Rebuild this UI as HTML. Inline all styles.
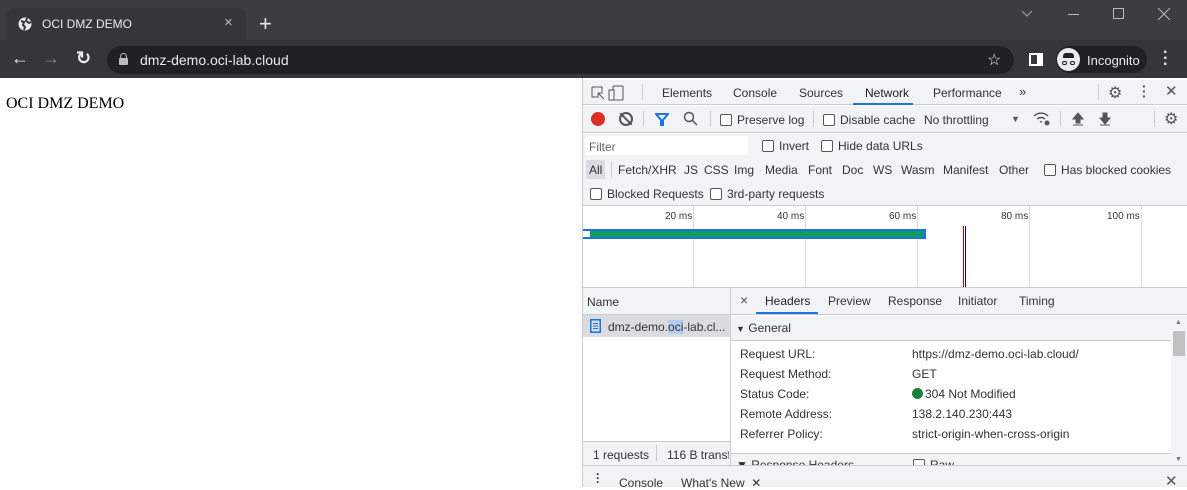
<!DOCTYPE html><html><head><style>
*{box-sizing:border-box;margin:0;padding:0}
body{width:1187px;height:487px;overflow:hidden;position:relative;background:#fff;font-family:"Liberation Sans",sans-serif}
.a{position:absolute}
.dt{font-size:12px;color:#333;white-space:nowrap}
.cb{display:inline-block;width:12px;height:12px;border:1px solid #555;border-radius:2px;vertical-align:-2px;margin-right:5px;background:#fff}
.vs{position:absolute;width:1px;background:#ccc}
</style></head><body>
<!-- tab strip -->
<div class="a" style="left:0;top:0;width:1187px;height:40px;background:#3c3d41"></div>
<div class="a" style="left:6px;top:8px;width:240px;height:34px;background:#35363a;border-radius:8px 8px 0 0"></div>
<svg class="a" style="left:18px;top:17px" width="14" height="14"><circle cx="7" cy="7" r="6.5" fill="#e8eaed"/><path d="M3 4 L6 5 L5 8 L7 10 L6 13 M9 1 L8 4 L11 6 L13 5" stroke="#35363a" stroke-width="2" fill="none"/></svg>
<div class="a" style="left:42px;top:17px;font-size:12px;color:#e8eaed">OCI DMZ DEMO</div>
<div class="a" style="left:224px;top:14px;font-size:15px;color:#bbb">×</div>
<div class="a" style="left:259px;top:11px;font-size:22px;color:#e8eaed;font-weight:300">+</div>
<svg class="a" style="left:1021px;top:10px" width="12" height="8"><path d="M1 1l5 5 5-5" stroke="#9aa0a6" fill="none"/></svg>
<div class="a" style="left:1068px;top:14px;width:11px;height:1px;background:#bbb"></div>
<div class="a" style="left:1113px;top:8px;width:11px;height:11px;border:1px solid #bbb"></div>
<svg class="a" style="left:1158px;top:8px" width="12" height="12"><path d="M0 0l12 12M12 0L0 12" stroke="#bbb"/></svg>
<!-- toolbar -->
<div class="a" style="left:0;top:40px;width:1187px;height:38px;background:#35363a"></div>
<div class="a" style="left:11px;top:48px;font-size:18px;color:#e8eaed">←</div>
<div class="a" style="left:42px;top:48px;font-size:18px;color:#80868b">→</div>
<div class="a" style="left:76px;top:48px;font-size:18px;color:#e8eaed;font-weight:bold">↻</div>
<div class="a" style="left:107px;top:46px;width:907px;height:28px;background:#202124;border-radius:14px"></div>
<div class="a" style="left:119px;top:58px;width:9px;height:7px;background:#bbb;border-radius:1px"></div>
<div class="a" style="left:120px;top:53px;width:7px;height:7px;border:1.5px solid #bbb;border-radius:4px 4px 0 0;border-bottom:none"></div>
<div class="a" style="left:140px;top:52px;font-size:14px;color:#e8eaed">dmz-demo.oci-lab.cloud</div>
<div class="a" style="left:987px;top:50px;font-size:16px;color:#e8eaed">☆</div>
<div class="a" style="left:1029px;top:53px;width:14px;height:13px;border:2px solid #fff;border-right:6px solid #fff"></div>
<div class="a" style="left:1056px;top:46px;width:91px;height:27px;background:#202124;border-radius:14px"></div>
<div class="a" style="left:1057px;top:48px;width:23px;height:23px;background:#e8eaed;border-radius:50%"></div>
<div class="a" style="left:1063px;top:53px;width:11px;height:5px;background:#202124;border-radius:3px 3px 0 0"></div>
<div class="a" style="left:1062px;top:61px;width:5px;height:4px;border:1px solid #202124;border-radius:2px"></div><div class="a" style="left:1070px;top:61px;width:5px;height:4px;border:1px solid #202124;border-radius:2px"></div>
<div class="a" style="left:1087px;top:53px;font-size:13px;color:#e8eaed">Incognito</div>
<div class="a" style="left:1163px;top:50px;font-size:16px;color:#e8eaed;font-weight:bold;line-height:6px">·<br>·<br>·</div>
<!-- page -->
<div class="a" style="left:6px;top:95px;font-family:'Liberation Serif',serif;font-size:16px;color:#000">OCI DMZ DEMO</div>
<!-- devtools -->
<div class="a" style="left:582px;top:78px;width:605px;height:409px;background:#fff;border-left:1px solid #ccc"></div>
<div class="a" style="left:583px;top:80px;width:604px;height:25px;background:#f1f3f4;border-bottom:1px solid #ccc"></div>
<svg class="a" style="left:590px;top:85px" width="40" height="16"><path d="M2 2h10v5M2 2v10h5M8 8l6 6M8 8v5M8 8h5" stroke="#555" fill="none"/><rect x="23" y="1" width="10" height="14" rx="1" stroke="#555" fill="none"/><rect x="19" y="5" width="5" height="10" stroke="#555" fill="#f1f3f4"/></svg>
<div class="vs" style="left:642px;top:84px;height:16px"></div>
<div class="a dt" style="left:662px;top:86px">Elements</div>
<div class="a dt" style="left:733px;top:86px">Console</div>
<div class="a dt" style="left:799px;top:86px">Sources</div>
<div class="a dt" style="left:865px;top:86px;color:#202124">Network</div>
<div class="a" style="left:853px;top:103px;width:60px;height:2px;background:#1a73e8"></div>
<div class="a dt" style="left:933px;top:86px">Performance</div>
<div class="a dt" style="left:1019px;top:84px;font-size:13px">»</div>
<div class="vs" style="left:1098px;top:84px;height:16px"></div>
<div class="a" style="left:1108px;top:83px;font-size:16px;color:#555">⚙</div>
<div class="a" style="left:1142px;top:84px;font-size:14px;color:#555;line-height:5px;font-weight:bold">·<br>·<br>·</div>
<div class="a" style="left:1165px;top:82px;font-size:15px;color:#555">✕</div>
<!-- row2 -->
<div class="a" style="left:583px;top:106px;width:604px;height:27px;background:#f1f3f4;border-bottom:1px solid #ccc"></div>
<div class="a" style="left:591px;top:112px;width:14px;height:14px;border-radius:50%;background:#d93025"></div>
<div class="a" style="left:619px;top:112px;width:14px;height:14px;border-radius:50%;border:2px solid #555"></div>
<div class="a" style="left:625px;top:111px;width:2px;height:16px;background:#555;transform:rotate(-45deg)"></div>
<div class="vs" style="left:643px;top:111px;height:16px"></div>
<svg class="a" style="left:655px;top:112px" width="14" height="14"><path d="M1 2h12L8 8v5H6V8z" fill="none" stroke="#1a73e8" stroke-width="2"/></svg>
<svg class="a" style="left:683px;top:111px" width="15" height="15"><circle cx="6" cy="6" r="4.5" stroke="#555" stroke-width="1.5" fill="none"/><path d="M9 9l5 5" stroke="#555" stroke-width="1.5"/></svg>
<div class="vs" style="left:710px;top:111px;height:16px"></div>
<div class="a dt" style="left:720px;top:113px"><span class="cb"></span>Preserve log</div>
<div class="vs" style="left:813px;top:111px;height:16px"></div>
<div class="a dt" style="left:823px;top:113px"><span class="cb"></span>Disable cache</div>
<div class="a dt" style="left:924px;top:113px">No throttling</div>
<div class="a dt" style="left:1011px;top:114px;font-size:9px;color:#555">▼</div>
<svg class="a" style="left:1033px;top:112px" width="18" height="14"><path d="M1 4a10 10 0 0 1 14 0M4 7a6 6 0 0 1 8 0M7 10a2 2 0 0 1 2 0" stroke="#555" stroke-width="1.5" fill="none"/><circle cx="14" cy="11" r="2.5" fill="#555"/></svg>
<div class="vs" style="left:1060px;top:111px;height:16px"></div>
<svg class="a" style="left:1072px;top:112px" width="12" height="14"><path d="M6 1l5 6H8v4H4V7H1z M1 13h10" fill="#555" stroke="#555"/></svg>
<svg class="a" style="left:1099px;top:112px" width="12" height="14"><path d="M4 1h4v5h3l-5 6-5-6h3z M1 13h10" fill="#555" stroke="#555"/></svg>
<div class="vs" style="left:1154px;top:111px;height:16px"></div>
<div class="a" style="left:1164px;top:109px;font-size:16px;color:#555">⚙</div>
<!-- filter rows -->
<div class="a" style="left:583px;top:134px;width:604px;height:72px;background:#f1f3f4;border-bottom:1px solid #ccc"></div>
<div class="a" style="left:585px;top:136px;width:163px;height:19px;background:#fff"></div>
<div class="a dt" style="left:589px;top:140px;color:#666">Filter</div>
<div class="a dt" style="left:762px;top:139px"><span class="cb"></span>Invert</div>
<div class="a dt" style="left:821px;top:139px"><span class="cb"></span>Hide data URLs</div>
<div class="a" style="left:586px;top:160px;width:19px;height:19px;background:#dadce0;border-radius:2px"></div>
<div class="a dt" style="left:589px;top:163px">All</div>
<div class="vs" style="left:611px;top:162px;height:15px"></div>
<div class="a dt" style="left:618px;top:163px">Fetch/XHR</div>
<div class="a dt" style="left:684px;top:163px">JS</div>
<div class="a dt" style="left:704px;top:163px">CSS</div>
<div class="a dt" style="left:734px;top:163px">Img</div>
<div class="a dt" style="left:765px;top:163px">Media</div>
<div class="a dt" style="left:808px;top:163px">Font</div>
<div class="a dt" style="left:842px;top:163px">Doc</div>
<div class="a dt" style="left:873px;top:163px">WS</div>
<div class="a dt" style="left:901px;top:163px">Wasm</div>
<div class="a dt" style="left:943px;top:163px">Manifest</div>
<div class="a dt" style="left:999px;top:163px">Other</div>
<div class="a dt" style="left:1044px;top:163px"><span class="cb"></span>Has blocked cookies</div>
<div class="a dt" style="left:590px;top:187px"><span class="cb"></span>Blocked Requests</div>
<div class="a dt" style="left:710px;top:187px"><span class="cb"></span>3rd-party requests</div>
<!-- timeline -->
<div class="vs" style="left:693px;top:206px;height:81px;background:#ddd"></div>
<div class="vs" style="left:805px;top:206px;height:81px;background:#ddd"></div>
<div class="vs" style="left:917px;top:206px;height:81px;background:#ddd"></div>
<div class="vs" style="left:1029px;top:206px;height:81px;background:#ddd"></div>
<div class="vs" style="left:1141px;top:206px;height:81px;background:#ddd"></div>
<div class="a dt" style="left:665px;top:211px;font-size:10px">20 ms</div>
<div class="a dt" style="left:777px;top:211px;font-size:10px">40 ms</div>
<div class="a dt" style="left:889px;top:211px;font-size:10px">60 ms</div>
<div class="a dt" style="left:1001px;top:211px;font-size:10px">80 ms</div>
<div class="a dt" style="left:1107px;top:211px;font-size:10px">100 ms</div>
<div class="a" style="left:583px;top:229px;width:343px;height:10px;background:#1a73e8"></div>
<div class="a" style="left:590px;top:231px;width:333px;height:6px;background:#0f9d58"></div>
<div class="a" style="left:583px;top:231px;width:7px;height:6px;background:#fff"></div>
<div class="a" style="left:963px;top:226px;width:1px;height:61px;background:#c00"></div>
<div class="a" style="left:965px;top:226px;width:1px;height:61px;background:#00c"></div>
<!-- lower -->
<div class="a" style="left:583px;top:287px;width:604px;height:1px;background:#ccc"></div>
<div class="a" style="left:583px;top:288px;width:147px;height:27px;background:#f1f3f4;border-bottom:1px solid #ccc"></div>
<div class="a dt" style="left:587px;top:295px">Name</div>
<div class="a" style="left:583px;top:315px;width:147px;height:22px;background:#dadce0"></div>
<svg class="a" style="left:590px;top:319px" width="11" height="14"><rect x="0.75" y="0.75" width="9.5" height="12.5" fill="none" stroke="#1a73e8" stroke-width="1.5"/><path d="M3 4.5h5M3 7h5M3 9.5h5" stroke="#1a73e8"/></svg>
<div class="a dt" style="left:608px;top:320px">dmz-demo.<span style="background:#b3cdf0">oci</span>-lab.cl...</div>
<div class="a" style="left:730px;top:288px;width:1px;height:177px;background:#ccc"></div>
<div class="a" style="left:583px;top:441px;width:147px;height:24px;background:#f1f3f4;border-top:1px solid #ccc"></div>
<div class="a dt" style="left:593px;top:448px">1 requests</div>
<div class="vs" style="left:656px;top:445px;height:16px"></div>
<div class="a dt" style="left:667px;top:448px;width:62px;overflow:hidden">116 B transferred</div>
<div class="a" style="left:731px;top:288px;width:456px;height:27px;background:#f1f3f4;border-bottom:1px solid #ccc"></div>
<div class="a dt" style="left:740px;top:292px;font-size:14px;color:#555">×</div>
<div class="a dt" style="left:765px;top:294px;color:#202124">Headers</div>
<div class="a" style="left:756px;top:312px;width:62px;height:2px;background:#1a73e8"></div>
<div class="a dt" style="left:828px;top:294px">Preview</div>
<div class="a dt" style="left:888px;top:294px">Response</div>
<div class="a dt" style="left:958px;top:294px">Initiator</div>
<div class="a dt" style="left:1019px;top:294px">Timing</div>
<div class="a" style="left:731px;top:316px;width:440px;height:25px;background:#f1f3f4;border-bottom:1px solid #ccc"></div>
<div class="a dt" style="left:736px;top:321px"><span style="font-size:9px">▼</span> General</div>
<div class="a dt" style="left:740px;top:344px;line-height:20px">Request URL:<br>Request Method:<br>Status Code:<br>Remote Address:<br>Referrer Policy:</div>
<div class="a dt" style="left:912px;top:344px;line-height:20px">https://dmz-demo.oci-lab.cloud/<br>GET<br><span style="display:inline-block;width:11px;height:11px;border-radius:50%;background:#188038;vertical-align:-1px;margin-right:2px"></span>304 Not Modified<br>138.2.140.230:443<br>strict-origin-when-cross-origin</div>
<div class="a" style="left:731px;top:453px;width:440px;height:12px;background:#f1f3f4;border-top:1px solid #ccc;overflow:hidden"><div class="dt" style="position:absolute;left:5px;top:4px">▼ Response Headers</div><div class="dt" style="position:absolute;left:182px;top:4px"><span class="cb"></span>Raw</div></div>
<div class="a" style="left:1171px;top:316px;width:16px;height:149px;background:#f1f3f4"></div>
<div class="a" style="left:1173px;top:331px;width:12px;height:25px;background:#c1c1c1"></div>
<div class="a dt" style="left:1175px;top:319px;font-size:7px;color:#777">▲</div>
<div class="a dt" style="left:1175px;top:456px;font-size:7px;color:#777">▼</div>
<!-- drawer -->
<div class="a" style="left:583px;top:465px;width:604px;height:22px;background:#f1f3f4;border-top:1px solid #ccc"></div>
<div class="a dt" style="left:596px;top:472px;font-weight:bold;line-height:4px">·<br>·<br>·</div>
<div class="a dt" style="left:619px;top:476px">Console</div>
<div class="a dt" style="left:681px;top:476px">What's New&nbsp; ✕</div>
<div class="a dt" style="left:1165px;top:472px;font-size:15px;color:#555">✕</div>
</body></html>
